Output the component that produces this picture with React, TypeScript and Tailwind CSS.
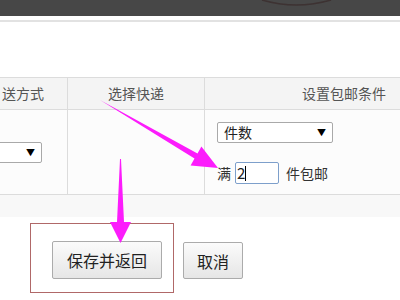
import React from "react";

const font = { fontFamily: '"Noto Sans CJK SC", "Noto Sans", sans-serif' };

const SelectBox = ({ label, className }: { label?: string; className: string }) => (
  <div
    className={`flex items-center justify-between h-[21px] border border-[#a9a9a9] rounded-[2px] bg-white pl-[6px] pr-[6px] text-[14px] text-[#222] ${className}`}
  >
    <span>{label}</span>
    <span className="text-[9px] leading-none text-black">▼</span>
  </div>
);

const Arrows = () => (
  <svg className="absolute inset-0 pointer-events-none" width="400" height="300" viewBox="0 0 400 300">
    {/* diagonal arrow */}
    <polygon
      points="100,100 197.5,153.4 201.4,146.4 218,168 190.6,165.6 194.5,158.6"
      fill="#fc1cfc"
    />
    {/* vertical arrow */}
    <polygon points="120,159 121,159 124,222 131,222 120.5,243 110,222 117,222" fill="#fc1cfc" />
  </svg>
);

export default function App() {
  return (
    <div className="relative w-[400px] h-[300px] overflow-hidden bg-white" style={font}>
      {/* top bar */}
      <div className="h-[16px] bg-[#474747] relative">
        <svg className="absolute inset-0" width="400" height="16" viewBox="0 0 400 16">
          <path d="M262,0 Q296,10 331,0" stroke="#3d3232" strokeWidth="1.5" fill="none" />
        </svg>
      </div>
      <div className="h-[4px] bg-white" />
      <div className="h-[2px] bg-[#e2e2e2]" />
      <div className="h-[55px] bg-white" />

      {/* table */}
      <div className="border-t border-[#dcdcdc]">
        <div className="flex h-[32px] bg-[#f4f4f4] border-b border-[#dcdcdc] text-[14px] text-[#555]">
          <div className="w-[68px] shrink-0 flex items-center pl-[2px] border-r border-[#dcdcdc]">
            送方式
          </div>
          <div className="w-[137px] shrink-0 flex items-center justify-center border-r border-[#dcdcdc]">
            选择快递
          </div>
          <div className="w-[278px] shrink-0 flex items-center justify-center">设置包邮条件</div>
        </div>
        <div className="flex h-[85px] bg-[#fcfcfc] border-b border-[#dcdcdc] text-[14px] text-[#333]">
          <div className="-ml-[38px] w-[106px] shrink-0 flex items-center justify-end pr-[25px] border-r border-[#dcdcdc]">
            <SelectBox className="w-[80px]" />
          </div>
          <div className="w-[137px] shrink-0 border-r border-[#dcdcdc]" />
          <div className="w-[278px] shrink-0 pl-[12px] pt-[12px]">
            <SelectBox label="件数" className="w-[116px]" />
            <div className="flex items-center mt-[19px] h-[22px]">
              <span className="mr-[4px]">满</span>
              <div className="flex items-center w-[44px] h-[22px] border border-[#7d9fcb] rounded-[2px] bg-white pl-[1px]">
                <span className="text-[15px] text-[#222]">2</span>
                <span className="w-px h-[15px] bg-black" />
              </div>
              <span className="ml-[7px]">件包邮</span>
            </div>
          </div>
        </div>
      </div>
      <div className="h-[22px] bg-[#f8f8f8]" />

      {/* buttons */}
      <div className="flex items-start pl-[30px] pt-[6px]">
        <div className="w-[144px] h-[70px] border border-[#b06868] pl-[21px] pt-[17px]">
          <button className="w-[110px] h-[38px] border border-[#ababab] rounded-[2px] bg-gradient-to-b from-[#fbfbfb] to-[#e6e6e6] text-[16px] text-[#222]">
            保存并返回
          </button>
        </div>
        <button className="ml-[9px] mt-[19px] w-[60px] h-[37px] border border-[#ababab] rounded-[2px] bg-gradient-to-b from-[#fbfbfb] to-[#e6e6e6] text-[16px] text-[#222]">
          取消
        </button>
      </div>

      <Arrows />
    </div>
  );
}
